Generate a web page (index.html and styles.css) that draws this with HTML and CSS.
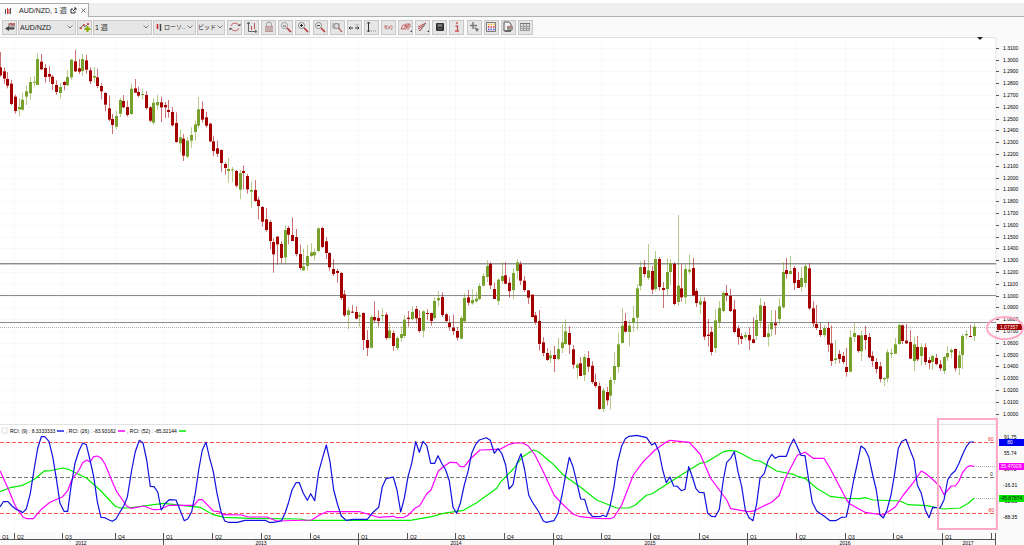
FILE: index.html
```
<!DOCTYPE html>
<html lang="ja">
<head>
<meta charset="utf-8">
<title>AUD/NZD, 1 週</title>
<link rel="stylesheet" href="styles.css">
</head>
<body>
<header class="tabs">
  <div class="tab">
    <svg class="tab-icon" viewBox="0 0 8 8"><path d="M1.500 2v5M6.500 1v6" stroke="#555"/><path d="M3.500 1v6M5 2v5" stroke="#c33"/></svg>
    <span class="tab-title">AUD/NZD, 1 週</span>
    <button class="tab-button" aria-label="切り離す"><svg viewBox="0 0 7 7"><path d="M3 2H1v4h4V4M4 1h2v2M6 1L3 4" fill="none" stroke="#333"/></svg></button>
    <button class="tab-button" aria-label="閉じる"><svg viewBox="0 0 7 7"><path d="M1.500 1.500l4 4M5.500 1.500l-4 4" stroke="#666"/></svg></button>
  </div>
</header>
<nav class="toolbar">
  <button class="tool" aria-label="銘柄"><svg viewBox="0 0 12 12"><path d="M4 2h7v6H4z" fill="#aaa"/><path d="M5 4l2-2 1 2 2-2v3" stroke="#c44" fill="none"/><path d="M5 5L1 7.500 5 10V8.500h5v-2H5z" fill="#444"/></svg></button>
  <div class="field symbol"><select aria-label="通貨ペア"><option>AUD/NZD</option></select><svg class="chevron" viewBox="0 0 6 4"><path d="M.5.5L3 3 5.500.5"/></svg></div>
  <button class="tool" aria-label="追加"><svg viewBox="0 0 12 12"><path d="M0 7h2l2-3 2 2 3-3" stroke="#777" fill="none"/><path d="M1 7h2M4 4h2M8 3h2" stroke="#c33" stroke-width="1.500"/><path d="M8.500 5v6M5.500 8h6" stroke="#8a0" stroke-width="2"/></svg></button>
  <div class="field period"><select aria-label="期間"><option>1 週</option></select><svg class="chevron" viewBox="0 0 6 4"><path d="M.5.5L3 3 5.500.5"/></svg></div>
  <div class="field style"><svg class="field-icon" viewBox="0 0 6 8"><path d="M1.500 1v5" stroke="#c22" stroke-width="1.500"/><path d="M4.500 1v7" stroke="#444" stroke-width="1.500"/></svg><select aria-label="チャート種類"><option>ローソ..</option></select><svg class="chevron" viewBox="0 0 6 4"><path d="M.5.5L3 3 5.500.5"/></svg></div>
  <div class="field side"><select aria-label="価格"><option>ビッド</option></select><svg class="chevron" viewBox="0 0 6 4"><path d="M.5.5L3 3 5.500.5"/></svg></div>
  <div class="tools">
    <button class="tool" aria-label="更新"><svg viewBox="0 0 12 12"><path d="M2 5a4.200 4.200 0 0 1 8 0M10 7a4.200 4.200 0 0 1-8 0" stroke="#c66" fill="none"/><path d="M8.500 5h3V2.500zM3.500 7h-3v2.500z" fill="#555"/></svg></button>
    <button class="tool" aria-label="軸"><svg viewBox="0 0 12 12"><path d="M2.500 1v9.500H11M1 3l1.500-2L4 3M9 9l2 1.500L9 12" stroke="#666" fill="none"/><path d="M5.500 5v4M8.500 2v6" stroke="#b55"/></svg></button>
    <button class="tool" aria-label="固定"><svg viewBox="0 0 12 12"><path d="M3.500 6V3.500a2.500 2.500 0 0 1 5 0V6" stroke="#999" fill="none"/><path d="M2 5h8v6H2z" fill="#b99"/><path d="M2 7h8M2 9h8" stroke="#ddd" stroke-width=".6"/></svg></button>
    <button class="tool" aria-label="範囲拡大"><svg viewBox="0 0 12 12"><circle cx="4.500" cy="4.500" r="3" fill="#eee" stroke="#999"/><path d="M3 5h3" stroke="#555"/><path d="M7 7l4 4" stroke="#b33" stroke-width="1.600"/></svg></button>
    <button class="tool" aria-label="拡大"><svg viewBox="0 0 12 12"><circle cx="4.500" cy="4.500" r="3" fill="#eee" stroke="#888"/><path d="M3 4.500h3M4.500 3v3" stroke="#222"/><path d="M7 7l4 4" stroke="#b33" stroke-width="1.600"/></svg></button>
    <button class="tool" aria-label="縮小"><svg viewBox="0 0 12 12"><circle cx="4.500" cy="4.500" r="3" fill="#eee" stroke="#888"/><path d="M3 4.500h3" stroke="#444"/><path d="M7 7l4 4" stroke="#b33" stroke-width="1.600"/></svg></button>
    <button class="tool" aria-label="全体表示"><svg viewBox="0 0 12 12"><path d="M1 2h8v6H1z" fill="#bbb"/><circle cx="5.500" cy="5" r="2.500" fill="#ddd" stroke="#888"/><path d="M7.500 7l3.500 4" stroke="#b66" stroke-width="1.400"/></svg></button>
    <button class="tool" aria-label="横軸"><svg viewBox="0 0 12 12"><path d="M1 7h4M7 7h4M2.500 5.500L1 7l1.500 1.500M9.500 5.500L11 7 9.500 8.500" stroke="#333" fill="none"/><path d="M7 4h4" stroke="#aaa"/></svg></button>
    <button class="tool" aria-label="縦軸"><svg viewBox="0 0 12 12"><path d="M3.500 1v10M2 2.500L3.500 1 5 2.500M2 9.500L3.500 11 5 9.500" stroke="#333" fill="none"/><path d="M6 10h6" stroke="#888" stroke-dasharray="1 1"/></svg></button>
    <button class="tool function" aria-label="指標">f(x)</button>
    <button class="tool" aria-label="図形"><svg viewBox="0 0 12 12"><path d="M1 8l2-4h3L4 8zM6 3h4v3H6zM5 9l4-6M7 8h2" stroke="#b44" fill="none" stroke-width=".8"/><path d="M10 11h2V9z" fill="#444"/></svg></button>
    <button class="tool" aria-label="フィボナッチ"><svg viewBox="0 0 12 12"><path d="M1 6l8-4M1 8l7-4M2 10l5-5" stroke="#b44"/><path d="M3 10l6-8" stroke="#888"/><path d="M10 11h2V9z" fill="#444"/></svg></button>
    <button class="tool" aria-label="保存"><svg viewBox="0 0 12 12"><rect x="2" y="2" width="8" height="8" rx="1" fill="#333"/><path d="M4 3.500h4v2H4zM4 8h4" fill="#777" stroke="#888" stroke-width=".6"/></svg></button>
    <button class="tool" aria-label="情報"><svg viewBox="0 0 12 12"><path d="M5 2h2M4.500 5h2v5M4 10h4" stroke="#c55" stroke-width="1.300" fill="none"/></svg></button>
    <button class="tool" aria-label="十字線"><svg viewBox="0 0 12 12"><path d="M5 1v7M2 4.500h7" stroke="#777" stroke-width="1.400"/><path d="M6 6l5 2-2 3z" fill="#777"/></svg></button>
    <button class="tool" aria-label="配色"><svg viewBox="0 0 12 12"><path d="M1.500 1.500h9v9h-9z" fill="#eee" stroke="#777"/><path d="M3 3.500h6.500" stroke="#fb2" stroke-width="1.500" stroke-dasharray="1.500 1"/><path d="M3 6h6.500" stroke="#e35" stroke-width="1.500" stroke-dasharray="1.500 1"/><path d="M3 8.500h6.500" stroke="#55d" stroke-width="1.500" stroke-dasharray="1.500 1"/></svg></button>
    <button class="tool" aria-label="印刷"><svg viewBox="0 0 12 12"><path d="M2 1h5l2 2v7H2z" fill="#eee" stroke="#555"/><path d="M5 5h6v4H5z" fill="#999"/><path d="M5 6h6" stroke="#c66"/><path d="M3 10h6" stroke="#333"/></svg></button>
    <button class="tool" aria-label="表"><svg viewBox="0 0 12 12"><path d="M1.500 2.500h9v7h-9zM1.500 5.500h9M1.500 7.500h9M4.500 3v7M7.500 3v7" fill="#ddd" stroke="#999"/><path d="M1 2.500h10" stroke="#777"/></svg></button>
  </div>
</nav>
<main class="workspace">
  <svg class="chart" viewBox="0 37 1024 508" role="img" aria-label="AUD/NZD 週足">
    <rect class="axis-bg" x="996" y="37" width="28" height="508"/>
    <rect class="axis-bg" x="0" y="532" width="1024" height="13"/>
    <g id="grid"></g>
    <path class="frame" d="M0 37.500H996V532M0 424.500H996"/>
    <path d="M977 37h6l-3 3z" fill="#222"/>
    <path class="level" d="M0 263.500H996M0 295.500H996M0 322.500H996"/>
    <path class="level faint" d="M0 264.500H996"/>
    <path class="dotted" d="M0 327.500H998"/>
    <g id="candles"></g>
    <g id="axis"></g>
    <path class="bound" d="M0 442.500H996M0 513.500H996"/>
    <path class="bound zero" d="M0 477.500H996"/>
    <path class="dotted" d="M974 466.500H998M974 498.500H998"/>
    <g id="series"></g>
    <rect x="2" y="428" width="5" height="5" fill="#fff" stroke="#ddd"/>
    <g class="legend">
      <text x="10" y="433">RCI: (9) : 8.3333333</text>
      <text x="66" y="433">, RCI: (26) : -83.93162</text>
      <text x="127" y="433">, RCI: (52) : -85.32144</text>
    </g>
    <path d="M57 431h7" stroke="#2222e0" stroke-width="1.500"/>
    <path d="M118 431h7" stroke="#f0f" stroke-width="1.500"/>
    <path d="M179 431h7" stroke="#0e0" stroke-width="1.500"/>
    <g class="bound-text">
      <text x="988" y="441">80</text><text class="dark" x="990" y="476">0</text><text x="987" y="512">-80</text>
    </g>
    <g class="tick-text">
      <text x="1004" y="439">91.75</text><text x="1004" y="455">55.74</text><text x="1004" y="471">19.72</text>
      <text x="1003" y="487">-16.31</text><text x="1003" y="503">-52.33</text><text x="1003" y="519">-88.35</text>
    </g>
    <g class="tags">
      <rect x="997" y="324" width="25" height="6" fill="#a00000"/><text x="1009" y="329">1.07357</text>
      <rect x="999" y="439" width="25" height="7" fill="#0000f0"/><text x="1010" y="444">80</text>
      <rect x="999" y="463" width="25" height="7" fill="#f0f"/><text x="1011" y="468">35.47009</text>
      <rect x="999" y="495" width="25" height="7" fill="#00e800"/><text class="dark" x="1011" y="500">-45.87874</text>
    </g>
    <g class="note">
      <ellipse cx="1005" cy="328" rx="18" ry="11"/>
      <rect x="938" y="419" width="59" height="110"/>
    </g>
  </svg>
</main>
<script src="chart.js"></script>
</body>
</html>
```
FILE: styles.css
```
* { box-sizing: border-box; }
body {
  margin: 0;
  background: #fff;
  color: #222;
  font-family: "Liberation Sans", "Noto Sans CJK JP", sans-serif;
  font-size: 7px;
}
button, select { font: inherit; color: inherit; margin: 0; padding: 0; }
.tabs {
  display: flex;
  height: 17px;
  padding-top: 3px;
  background: linear-gradient(#fff 3px, #efefef 3px);
  border-bottom: 1px solid #b0b0b0;
}
.tab {
  display: flex;
  align-items: center;
  gap: 3px;
  height: 14px;
  width: 89px;
  padding-left: 4px;
  background: #fafafa;
  border: 1px solid #aaa;
  border-width: 1px 1px 0 0;
}
.tab-icon { flex: none; width: 8px; height: 8px; }
.tab-title { margin-left: 4px; white-space: nowrap; line-height: 12px; }
.tab-button { display: flex; border: 0; background: none; }
.tab-button svg { width: 7px; height: 7px; }
.toolbar {
  display: flex;
  align-items: center;
  gap: 1px;
  height: 20px;
  padding-left: 2px;
  background: #fafafa;
}
.tool {
  display: flex;
  align-items: center;
  justify-content: center;
  flex: none;
  width: 15px;
  height: 15px;
  border: 1px solid #c8c8c8;
  background: #e6e6e6;
}
.tool svg { flex: none; width: 12px; height: 12px; }
.function { font-size: 6px; color: #a33; }
.field {
  display: flex;
  align-items: center;
  flex: none;
  height: 15px;
  padding: 0 2px 0 1px;
  border: 1px solid #c8c8c8;
  background: #e6e6e6;
}
.field select { flex: 1; min-width: 0; height: 13px; border: 0; background: none; appearance: none; }
.field-icon { flex: none; width: 6px; height: 8px; margin: 0 2px 0 1px; }
.chevron { flex: none; width: 6px; height: 4px; fill: none; stroke: #777; }
.symbol { width: 58px; }
.period { width: 59px; }
.style { width: 43px; }
.side { width: 28px; padding: 0 1px 0 0; }
.style select, .side select { font-size: 6px; }
.tools { display: flex; justify-content: space-between; width: 306px; margin-left: 1px; }
.workspace { width: 100%; }
.chart { display: block; width: 100%; height: auto; }
.axis-bg { fill: #fafafa; }
.grid { stroke: #f8f8f8; fill: none; }
.frame { stroke: #e2e2e2; fill: none; }
.level { stroke: #8c8c8c; fill: none; }
.faint { stroke: #ccc; }
.dotted { stroke: #b0b0b0; stroke-dasharray: 1 1; }
.up { fill: #78a02c; }
.down { fill: #a40000; }
.wick { opacity: .55; }
.bound { stroke: #f55; stroke-dasharray: 4 2; fill: none; }
.zero { stroke: #777; }
.series { fill: none; stroke-width: 1.2px; stroke-linejoin: round; }
.blue { stroke: #1111e0; }
.magenta { stroke: #f0f; }
.green { stroke: #0e0; }
.legend, .tick-text, .tags, .bound-text { font-size: 5px; fill: #000; }
.bound-text { fill: #e33; }
.tags text { fill: #fff; text-anchor: middle; }
.tags .dark, .bound-text .dark { fill: #222; }
.tick { stroke: #555; fill: none; }
.year { text-anchor: middle; }
.note { fill: none; stroke: #ffabc8; stroke-width: 2px; }
```
FILE: chart.js
```
// Weekly candles: direction, high, body top, body bottom, low, in thirds of a unit below "top".
const candleBlocks = [
  { top: 36, rows: `r 48 94 118 122;r 94 106 128 143;r 108 129 149 157;r 132 143 204 208;r 176 182 225 233;g 187 213 220 241;g 170 191 221 224;g 148 166 182 207;g 123 138 172 191;g 120 137 140 151;g 52 69 147 147;r 54 77 100 102;r 84 96 123 140;r 90 114 122 138;r 117 122 144 162;r 133 147 168 176;g 140 153 171 187;r 135 138 147 163;g 102 123 148 150;g 69 71 124 131;r 41 76 106 108;r 69 97 107 114;g 54 69 105 120;r 57 73 101 113;r 94 103 136 144;g 93 120 125 140;r 98 124 150 156;r 141 150 166 190;r 168 171 206 226;r 178 217 251 256;r 234 249 267 294;g 224 240 272 279;g 185 192 233 243;r 177 195 214 217;r 194 213 237 242;g 144 158 234 238;r 129 157 170 170;r 152 168 179 184;g 158 174 177 191;r 165 177 216 221;r 210 214 254 259;g 187 200 260 265;g 176 198 208 222;r 182 199 214 258;r 198 207 214 246;r 192 222 228 245;r 213 228 268 272;r 229 261 318 320;g 280 304 322 350;r 294 308 359 375;g 303 314 362 366;g 274 297 314 335;g 253 265 288 314;g 183 220 269 278;r 196 219 251 260;r 228 244 269 275;r 260 263 316 319;r 299 316 345 360;r 314 337 353 363;r 340 342 381 407;r 379 384 396 416;g 366 399 405 440;g 393 400 403 438;r 402 405 449 455;g 402 411 461 490;r 388 405 411 460;r 414 420 460 473` },
  { top: 180, rows: `g 6 30 35 83;r 0 30 63 66;r 50 59 78 118;r 78 81 125 140;r 84 118 150 155;r 120 126 183 208;r 175 186 223 278;r 168 170 193 254;r 183 192 234 249;g 136 150 232 254;r 138 144 164 193;r 112 165 183 183;r 147 171 222 229;r 193 222 264 270;g 206 259 271 273;g 195 228 258 272;g 190 217 228 231;g 206 216 226 241;g 142 145 213 217;r 140 144 201 204;r 171 184 219 237;r 216 219 262 272;r 237 267 282 288;r 266 273 279 308;r 276 279 354 360;r 330 343 406 411;g 381 391 405 448;r 375 395 397 399;r 379 396 416 418;g 397 405 410 440;r 397 399 480 510;r 450 480 504 528;g 405 411 503 506;r 364 411 421 428;r 391 414 423 440;g 385 405 408 424;r 397 404 474 480;g 430 451 474 478;r 451 459 498 512;g 469 474 504 510;g 439 462 474 486;g 405 419 468 475;r 393 413 417 440;g 378 396 417 421;r 378 387 415 430;r 391 414 453 459;g 391 394 452 472;r 388 399 401 421;r 398 399 423 437;g 351 363 414 419;g 334 354 361 378;r 337 351 405 411;r 399 403 423 426;r 408 429 441 452;r 404 443 453 465;r 441 453 473 482;g 408 414 476 478;g 340 354 424 430;r 330 352 368 377;g 328 360 370 374;g 337 356 364 368;g 310 318 357 360;g 279 288 317 320;g 241 258 291 306` },
  { top: 200, rows: `r 186 192 256 267;r 248 267 297 297;g 235 239 303 316;g 186 228 243 252;r 187 226 251 253;r 232 248 273 293;g 204 219 270 298;g 178 187 213 238;r 184 193 242 255;r 228 242 270 276;r 270 271 293 312;r 283 284 351 353;r 336 346 366 374;r 331 363 432 452;r 411 427 459 469;r 444 459 480 483;g 450 466 475 489;r 438 465 477 516;g 414 447 477 481;g 372 427 444 460;g 358 394 432 435;r 379 399 434 462;r 435 448 494 506;g 488 494 504 536;r 471 490 528 528;g 462 471 525 543;r 453 474 500 516;r 484 497 546 552;r 520 546 558 564;r 547 558 627 630;g 564 571 627 636;r 561 576 601 616;g 532 540 587 629;g 456 498 540 553;g 397 433 501 518;g 324 377 429 430;r 339 363 395 398;g 361 377 396 438;g 318 354 369 396;g 252 265 353 390;g 184 201 258 271;r 180 201 222 232;g 132 211 234 241;r 198 213 269 282;g 153 177 267 273;r 171 177 261 272;r 246 264 270 324;g 175 216 267 285;g 177 189 216 256;r 186 192 312 316;g 45 257 306 317;r 193 265 292 305;g 193 207 292 312;g 163 209 215 222;r 174 204 286 289;r 265 273 309 321;g 290 304 314 342;r 292 304 410 420;r 357 404 408 440;r 380 396 456 466;g 327 361 444 459;g 303 324 366 384;g 273 279 333 337;r 255 279 286 303;r 267 288 333 336;r 300 328 396 400;r 376 385 411 434;r 399 408 417 432;g 396 405 412 420;r 382 405 421 450;r 352 418 429 430;g 343 360 408 420;g 294 316 363 381;r 306 318 411 411;g 373 400 411 439;g 331 366 388 408;r 331 370 376 404;g 294 319 357 372;g 186 216 322 326;r 174 210 222 236;g 168 213 222 222;r 198 204 249 270;r 216 240 264 264;g 201 234 261 275;g 193 198 249 262;r 190 205 325 330;r 303 325 370 381;r 315 372 384 390;r 369 390 405 411;g 375 384 405 411;r 366 384 434 456;r 376 430 483 498;g 420 475 480 493;r 450 462 477 490;r 456 468 486 492;r 444 501 516 530;g 391 412 515 517;g 367 399 411 426;r 405 406 453 458;g 393 406 454 483;r 378 405 420 450;r 399 411 472 475;r 454 468 483 500;r 474 486 507 520;r 486 499 537 547;g 531 534 538 558;g 448 457 535 547;g 445 459 462 475;g 414 433 461 463;g 370 375 432 435;r 373 376 423 432;r 372 422 430 432;r 391 426 476 477;g 411 433 483 513;r 408 441 478 484;g 430 441 468 496;r 430 442 486 495;r 471 480 489 507;g 465 468 486 510;r 462 474 492 496;r 480 493 505 513;g 468 471 513 522;g 438 459 472 483;g 444 450 457 475;r 445 447 505 514;g 453 466 504 525;g 402 408 465 507;g 390 402 406 417;r 375 408 411 411;g 370 380 408 423` }
];

// Oscillator lines: point lists in thirds of a unit, one list per 250-unit stretch.
const lines = {
  green: [
    "0,215 30,203 65,197 100,180 134,152 148,153 160,150 188,144 205,148 260,175 300,210 345,258 360,264 385,264 490,250 600,262 640,284 672,292",
    "0,295 150,297 170,301 480,301 545,290 580,280 640,271 680,248 740,205",
    "0,188 40,147 68,110 100,90 115,95 160,133 190,165 240,200 290,240 350,264 385,264 405,256 440,225 455,222 520,180 600,130 620,126 670,95 690,91 710,94",
    "0,115 15,122 30,123 80,153 130,163 145,170 165,175 200,205 240,229 290,235 330,236 345,233 370,240 450,243 475,254 530,257 580,267 630,264 655,250 672,235"
  ],
  magenta: [
    "0,152 24,205 46,258 68,290 80,296 100,296 124,268 150,247 188,230 203,212 215,180 237,150 248,128 260,120 270,126 281,110 292,108 304,115 315,132 337,185 350,215 380,258 393,265 432,258 460,269 480,268 508,256 582,256 596,239 607,239 640,273 657,275 672,284 725,285 745,291",
    "0,291 50,291 80,303 185,300 210,284 230,275 330,275 385,292 430,289 440,293 462,292 474,286 496,264 509,257 530,221 543,210 565,153 580,140 600,127 620,128 631,140 643,140 660,118 690,90 740,88",
    "0,88 28,73 45,69 68,69 85,78 105,105 130,155 162,225 185,250 220,283 240,290 290,295 330,296 342,292 365,255 400,165 430,125 465,90 500,65 510,61 568,67 600,102 632,175 680,240 692,266 740,274",
    "0,275 15,272 30,263 65,247 87,227 108,170 142,106 165,97 190,115 222,115 240,145 290,240 300,252 345,277 400,285 435,262 460,225 490,188 514,153 526,160 550,180 570,200 582,224 604,198 616,198 627,183 638,157 650,142 660,137 672,139"
  ],
  blue: [
    "0,261 10,245 24,245 36,258 50,269 60,272 68,278 79,267 91,220 102,150 113,85 124,50 134,50 147,64 158,110 169,175 180,250 192,274 203,274 213,200 225,130 237,92 248,69 259,74 270,120 281,170 292,245 303,292 315,293 326,299 337,304 348,297 360,276 371,258 382,232 395,150 406,95 418,61 429,69 440,120 451,199 462,200 473,216 484,270 496,250 508,239 528,240 540,270 553,302 563,297 575,275 586,220 596,150 607,90 618,67 629,115 640,155 651,220 663,275 674,303 685,307 712,307 735,301",
    "0,301 46,301 57,307 70,307 94,303 105,280 115,250 126,210 138,188 148,188 160,220 172,241 182,221 194,242 206,155 218,112 229,75 240,125 251,210 263,255 274,288 288,301 310,298 352,298 366,280 386,262 397,200 408,176 430,171 441,210 452,276 463,235 474,170 485,130 497,65 508,97 519,64 530,76 542,130 554,130 564,107 575,130 587,150 598,182 609,262 620,280 631,250 643,195 654,155 665,100 677,73 688,60 709,53 721,61 733,100 744,86",
    "5,100 17,135 27,207 39,194 50,133 63,101 74,150 86,225 97,246 115,273 130,303 138,307 162,302 174,280 186,225 197,165 208,112 219,140 231,190 242,237 254,238 265,275 277,289 300,290 309,286 319,290 330,260 342,200 353,125 365,78 376,56 387,49 410,46 440,53 455,75 465,69 477,95 488,150 499,188 510,171 521,198 532,199 544,212 555,208 566,140 577,170 588,206 598,217 612,218 623,280 634,289 646,290 658,268 670,180 680,127 692,115 703,95 714,155 725,200 736,270 747,293",
    "9,302 20,250 30,175 43,160 54,122 65,103 76,115 87,109 109,109 120,78 131,57 142,80 153,106 165,107 176,180 187,247 200,273 222,288 240,302 257,302 275,292 289,291 300,240 311,180 322,130 333,78 344,86 356,110 368,165 379,210 390,285 400,294 411,270 423,225 434,160 445,85 456,64 468,58 480,90 492,120 502,195 514,220 526,270 537,293 548,262 570,264 582,240 593,180 604,163 616,152 627,130 638,103 649,80 660,66 672,66"
  ]
};

const quarters = [14, 62, 115, 163, 212, 261, 310, 358, 407, 455, 504, 553, 601, 650, 699, 747, 796, 845, 893, 942];
const years = [[81, 2012], [261, 2013], [456, 2014], [650, 2015], [845, 2016], [968, 2017]];
const fill = (id, markup) => { document.getElementById(id).innerHTML = markup; };

let candles = "";
let index = 0;
for (const block of candleBlocks) {
  for (const row of block.rows.split(";")) {
    const [dir, ...parts] = row.split(" ");
    const [high, top, bottom, low] = parts.map(v => block.top + v / 3);
    const left = Math.round(0.4 + index * 3.745 - 1.5);
    const kind = dir === "g" ? "up" : "down";
    candles += `<rect class="${kind} wick" x="${left + 1}" y="${high}" width="1" height="${low - high}"/>`;
    candles += `<rect class="${kind}" x="${left}" y="${top}" width="3" height="${Math.max(1, bottom - top)}"/>`;
    index += 1;
  }
}
fill("candles", candles);

let grid = "";
let axis = "";
for (let i = 0; i <= 31; i += 1) {
  const y = Math.round(47.8 + i * 11.8);
  grid += `<path class="grid" d="M0 ${y}.5H996"/>`;
  axis += `<path class="tick" d="M996 ${y}.5h3"/><text x="1003" y="${y + 2}">${(1.31 - i / 100).toFixed(4)}</text>`;
}
axis += `<path class="tick" d="M0 539.5H996M991.500 533v6M995.500 533v12"/><text x="2" y="539">Q1</text>`;
quarters.forEach((x, i) => {
  const q = (i + 1) % 4 + 1;
  grid += `<path class="grid" d="M${x}.5 38V532"/>`;
  axis += `<path class="tick" d="M${x}.5 533V${q === 1 ? 545 : 539}"/><text x="${x + 3}" y="539">Q${q}</text>`;
});
for (const [x, year] of years) axis += `<text class="year" x="${x}" y="545">${year}</text>`;
fill("grid", grid);
fill("axis", `<g class="tick-text">${axis}</g>`);

fill("series", Object.entries(lines).map(([name, stretches]) => {
  const points = stretches.flatMap((list, n) => list.split(" ").map(pair => {
    const [x, y] = pair.split(",").map(Number);
    return `${(n * 250 + x / 3).toFixed(1)},${(420 + y / 3).toFixed(1)}`;
  }));
  return `<polyline class="series ${name}" points="${points.join(" ")}"/>`;
}).join(""));
```
